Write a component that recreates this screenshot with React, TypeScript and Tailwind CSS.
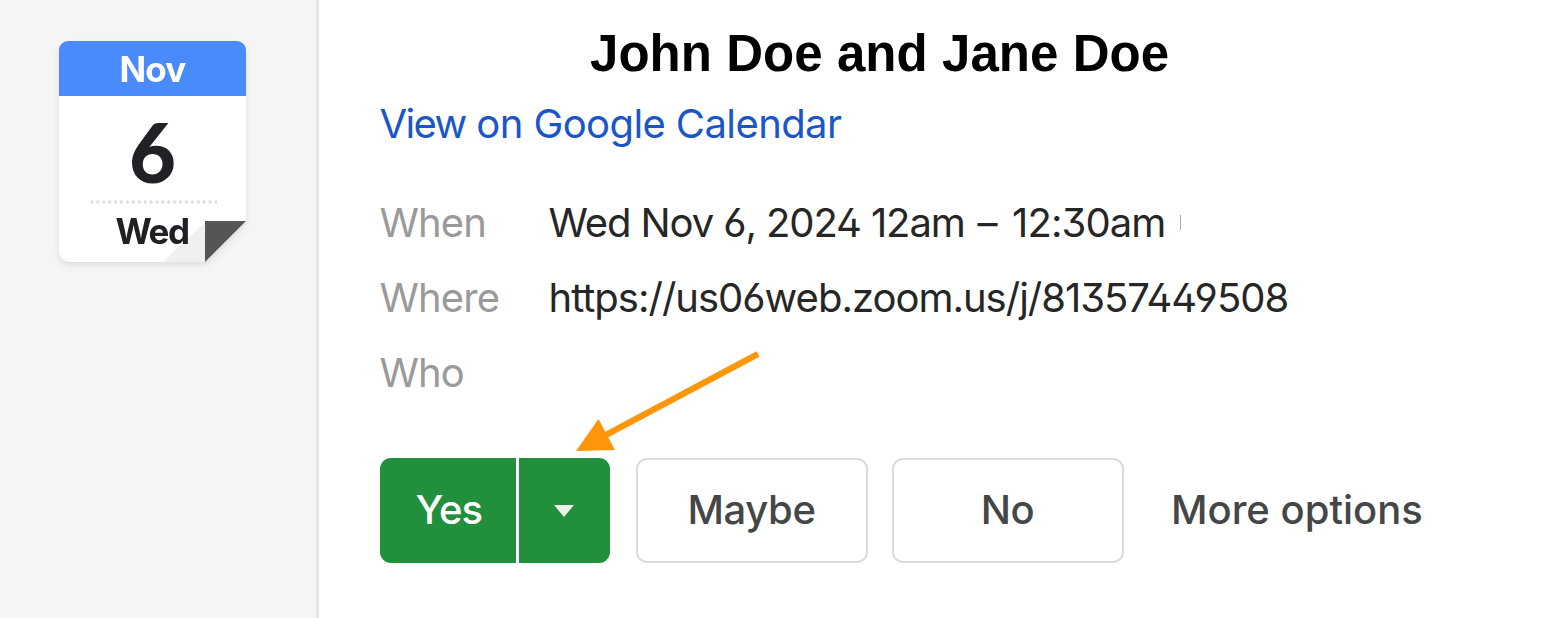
import React from "react";

function CalendarBadge() {
  return (
    <div className="relative h-[221px] w-[187px] drop-shadow-[0_3px_3px_rgba(0,0,0,0.09)]">
      <div className="relative flex h-full w-full flex-col items-center overflow-hidden rounded-t-[9px] rounded-bl-[11px] bg-white [clip-path:polygon(0_0,187px_0,187px_180px,146px_221px,0_221px)]">
        <svg className="absolute right-[41px] bottom-0" width="42" height="41" viewBox="0 0 42 41">
          <path d="M0 41 L42 1 V41 Z" fill="#f0f0f0" />
        </svg>
        <div className="flex h-[55px] w-full items-center justify-center bg-[#4a8bfb] pt-[2px] text-[35px] leading-none font-bold tracking-[-0.9px] text-white">
          Nov
        </div>
        <div className="flex h-[104px] items-center font-['Lato',sans-serif] text-[81px] leading-none font-black text-[#202124]">
          <span className="pt-[6px]">6</span>
        </div>
        <svg width="128" height="4" viewBox="0 0 128 4">
          <line x1="3" y1="2" x2="127" y2="2" stroke="#dedede" strokeWidth="3.4" strokeLinecap="round" strokeDasharray="0 5.9" />
        </svg>
        <div className="relative pt-[7px] pr-[1px] text-[35px] leading-[40px] font-bold tracking-[-1.5px] text-[#202124]">Wed</div>
      </div>
      <svg className="absolute right-0 bottom-0" width="42" height="42" viewBox="0 0 42 42">
        <path d="M1 1 H42 L1 42 Z" fill="#555555" />
      </svg>
    </div>
  );
}

function Row({ label, children }: { label: string; children?: React.ReactNode }) {
  return (
    <div className="flex h-[75.3px] items-center whitespace-nowrap">
      <span className="w-[169px] tracking-[-0.9px] text-[#9a9a9a]">{label}</span>
      {children}
    </div>
  );
}

export default function App() {
  return (
    <div className="flex h-[618px] w-[1548px] overflow-hidden bg-white font-['Inter',sans-serif] text-[40px] leading-[50px]">
      <aside className="w-[319px] shrink-0 border-r-[3px] border-[#e3e3e3] bg-[#f5f5f5] pt-[41px] pl-[59px]">
        <CalendarBadge />
      </aside>
      <main className="relative flex grow flex-col pt-[24px] pl-[60.5px]">
        <h1 className="pl-[210.5px] font-['Liberation_Sans',Arial,sans-serif] text-[51px] leading-[60px] font-bold tracking-[0.05px] whitespace-nowrap text-black">
          John Doe and Jane Doe
        </h1>
        <a className="mt-[15px] tracking-[-0.6px] whitespace-nowrap text-[#1a56c8]">
          <span className="tracking-[-1.6px]">View</span> on Google Calendar
        </a>
        <section className="mt-[36px]">
          <Row label="When">
            <span className="tracking-[-1.1px] text-[#262626] [font-feature-settings:'ss01']">
              Wed Nov 6, 2024 12am
              <span className="tracking-[1.6px]"> – </span>
              <span className="tracking-[-0.9px]">12:30am</span>
            </span>
            <span className="ml-[15px] h-[15px] w-px bg-[#aaaaaa]" />
          </Row>
          <Row label="Where">
            <span className="tracking-[-1px] text-[#262626] [font-feature-settings:'ss01']">https://us06web.zoom.us/j/81357449508</span>
          </Row>
          <Row label="Who" />
        </section>
        <div className="mt-[47px] flex h-[105px] items-center font-medium whitespace-nowrap text-[#444746]">
          <div className="flex h-full gap-[3px] text-white">
            <button className="flex w-[136.5px] items-center justify-center rounded-l-[11px] bg-[#228f3d] pl-[2px] tracking-[-1px]">Yes</button>
            <button className="flex w-[90.5px] items-center justify-center rounded-r-[11px] bg-[#228f3d] pt-[2px]">
              <svg width="22" height="12" viewBox="0 0 22 12">
                <path d="M1 0 H21 L11 12 Z" fill="#eef3ea" />
              </svg>
            </button>
          </div>
          <button className="ml-[26px] h-full w-[232px] rounded-[11px] border-2 border-[#dadce0] tracking-[-0.4px]">Maybe</button>
          <button className="ml-[24px] h-full w-[232px] rounded-[11px] border-2 border-[#dadce0] tracking-[-0.5px]">No</button>
          <span className="ml-[47.5px]">More options</span>
        </div>
        <svg className="absolute top-[348px] left-[255px]" width="190" height="106" viewBox="0 0 190 106">
          <path d="M184 6 L30 88" stroke="#ff9508" strokeWidth="6.5" />
          <path d="M2 103 L24.5 71 L41 102 Z" fill="#ff9508" />
        </svg>
      </main>
    </div>
  );
}
